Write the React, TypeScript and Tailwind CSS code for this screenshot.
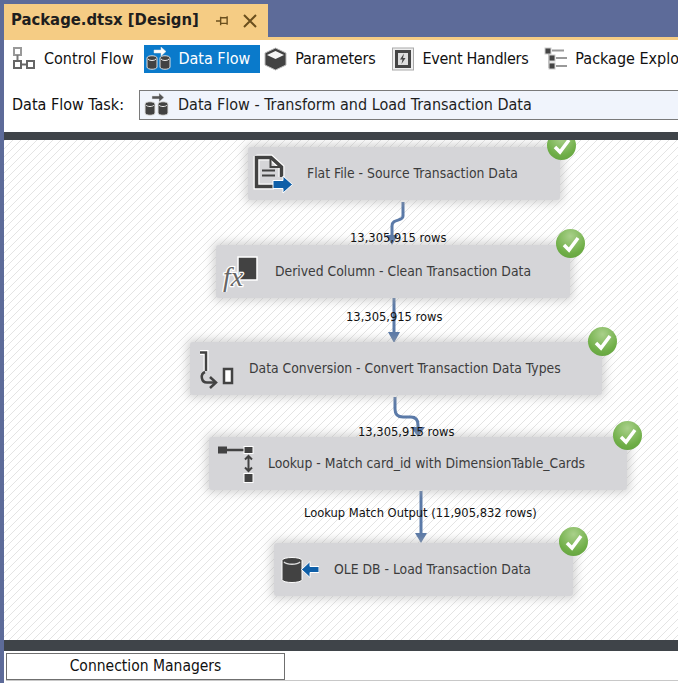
const font = "font-['DejaVu_Sans_Condensed','Noto_Sans',sans-serif]";

const ControlFlowIcon = () => (
  <svg width="24" height="24" viewBox="0 0 24 24" fill="none" stroke="#666" strokeWidth="2">
    <rect x="2" y="1" width="7" height="7" fill="#fff" stroke="#999" />
    <path d="M5.500 8v5" stroke="#777" />
    <rect x="2" y="14" width="7" height="7" fill="#fff" />
    <rect x="15" y="14" width="7" height="7" fill="#fff" />
    <path d="M14 17.500h-4" stroke="#666" />
  </svg>
);

const DataFlowIcon = ({ light = false }: { light?: boolean }) => (
  <svg width="25" height="24" viewBox="0 0 25 24">
    <path d="M8 3h7V0l5 4.500L15 9V6H8z" fill={light ? "#fff" : "#555"} stroke="#ddd" strokeWidth="0.500" />
    <path d="M1 11c0-3 10-3 10 0v9c0 3-10 3-10 0z" fill="#424242" stroke="#ddd" />
    <path d="M14 11c0-3 10-3 10 0v9c0 3-10 3-10 0z" fill="#424242" stroke="#ddd" />
    <path d="M2 12c1 2 7 2 8 0M15 12c1 2 7 2 8 0" fill="none" stroke="#eee" />
  </svg>
);

const ParametersIcon = () => (
  <svg width="23" height="24" viewBox="0 0 23 24">
    <path d="M11.500 1 22 6v12l-10.500 5L1 18V6z" fill="#424242" stroke="#bbb" />
    <path d="M11.500 4 20 8l-8.500 4L3 8z" fill="#f4f4f4" />
  </svg>
);

const EventIcon = () => (
  <svg width="22" height="24" viewBox="0 0 22 24">
    <rect x="0.500" y="1" width="21" height="22" fill="#eee" stroke="#aaa" />
    <rect x="3" y="3" width="16" height="18" fill="#444" />
    <rect x="6" y="6" width="10" height="12" fill="#ddd" />
    <path d="M12 6.500 8 12.500h2.500L9.500 17l4-6H11z" fill="#444" />
  </svg>
);

const ExplorerIcon = () => (
  <svg width="24" height="24" viewBox="0 0 24 24">
    <rect x="1" y="1" width="6" height="6" fill="#444" stroke="#ccc" />
    <path d="M8 3.500h12" stroke="#999" strokeWidth="2" />
    <path d="M5 7v14" stroke="#aaa" strokeWidth="1.500" />
    <rect x="5" y="8" width="6" height="6" fill="#444" stroke="#ccc" />
    <path d="M12 11h11" stroke="#999" strokeWidth="2" />
    <rect x="5" y="16" width="6" height="6" fill="#444" stroke="#ccc" />
    <path d="M12 19h11" stroke="#999" strokeWidth="2" />
  </svg>
);

const Tool = ({
  icon,
  label,
  className,
  active = false,
}: {
  icon: React.ReactNode;
  label: string;
  className: string;
  active?: boolean;
}) => (
  <div className={`flex h-[28px] shrink-0 items-center ${active ? "bg-[#0a7acb] text-white" : "text-[#111]"} ${className}`}>
    {icon}
    <span className="whitespace-nowrap">{label}</span>
  </div>
);

const FlatFileIcon = () => (
  <svg width="40" height="40" viewBox="0 0 40 40" fill="none">
    <path d="M3.500 3.500H18L28.500 13v10M3.500 2v30.500H21" stroke="#fff" strokeWidth="6" />
    <path d="M3.500 3.500H18L28.500 13v10M3.500 2v30.500H21" stroke="#424242" strokeWidth="3.500" />
    <path d="M17.500 3.500V13h10" stroke="#424242" strokeWidth="2" />
    <path d="M9 16.500h13M9 21.500h13" stroke="#424242" strokeWidth="2" />
    <path d="M20 26.500h10V22l9.500 8.500L30 39v-4.500H20z" fill="#0f5fa8" stroke="#fff" strokeWidth="1" />
  </svg>
);

const DerivedIcon = () => (
  <svg width="40" height="40" viewBox="0 0 40 40" fill="none">
    <path d="M17 5h19v23H17z" fill="#424242" stroke="#fff" strokeWidth="1.500" />
    <text x="2" y="34" fontFamily="'Liberation Serif', serif" fontStyle="italic" fontSize="28" fill="#666" stroke="#fff" strokeWidth="2.500" paintOrder="stroke">
      fx
    </text>
  </svg>
);

const ConvertIcon = () => (
  <svg width="40" height="40" viewBox="0 0 40 40" fill="none">
    <path d="M5 3.500h6V22" stroke="#fff" strokeWidth="5" />
    <path d="M5 3.500h6V22" stroke="#424242" strokeWidth="2.500" />
    <path d="M10 23c-5 2-4 10.500 2 10.500h8" stroke="#424242" strokeWidth="2.500" />
    <path d="m15 28 6 5.500-6 5.500" stroke="#424242" strokeWidth="2.500" />
    <rect x="29" y="20" width="8" height="14" fill="#fff" stroke="#424242" strokeWidth="2.500" />
  </svg>
);

const LookupIcon = () => (
  <svg width="40" height="40" viewBox="0 0 40 40" fill="none">
    <path d="M12 6h19" stroke="#424242" strokeWidth="2.500" />
    <rect x="4" y="2.500" width="9" height="7" fill="#424242" />
    <rect x="30" y="2.500" width="9" height="7" fill="#424242" stroke="#fff" />
    <path d="M34.500 12v15M31 15.500l3.500-3.500 3.500 3.500M31 23.500l3.500 3.500 3.500-3.500" stroke="#424242" strokeWidth="2" />
    <rect x="30" y="29.500" width="9" height="9" fill="#424242" stroke="#fff" />
  </svg>
);

const OleIcon = () => (
  <svg width="40" height="40" viewBox="0 0 40 40" fill="none">
    <path d="M3 10.500c0-4 20-4 20 0v19c0 4-20 4-20 0z" fill="#424242" stroke="#fff" />
    <path d="M5 12c3 3 13 3 16 0" stroke="#ddd" strokeWidth="1.500" />
    <path d="M40 16.500h-9v-5l-8.500 8 8.500 8v-5h9z" fill="#0f5fa8" stroke="#fff" />
  </svg>
);

const Check = ({ className }: { className: string }) => (
  <div className={`absolute flex h-[29px] w-[29px] items-center justify-center rounded-full bg-[radial-gradient(circle_at_50%_25%,#a9d08a,#6fae47_65%,#5f9e3c)] ${className}`}>
    <svg width="20" height="18" viewBox="0 0 20 18" fill="none">
      <path d="m3 10 5 5 9-12" stroke="#fff" strokeWidth="3.500" />
    </svg>
  </div>
);

const Node = ({ className, icon, label, iconGap }: { className: string; icon: React.ReactNode; label: string; iconGap: string }) => (
  <div className={`absolute flex h-[53px] items-center rounded-[3px] bg-[#d5d5d8] text-[13.800px] text-[#3c3c3c] shadow-[0_0_8px_3px_rgba(170,170,170,0.5)] ${className}`}>
    <div className={`flex shrink-0 items-center pl-[5px] ${iconGap}`}>{icon}</div>
    <span className="whitespace-nowrap">{label}</span>
  </div>
);

const RowLabel = ({ className, children }: { className: string; children: string }) => (
  <span className={`absolute whitespace-nowrap text-[12.800px] leading-[16px] text-[#111] ${className}`}>{children}</span>
);

const Connectors = () => (
  <svg className="absolute left-0 top-0" width="674" height="500" fill="none" stroke="#5b7aa8" strokeWidth="3">
    <path d="M399 62v14c0 6-11 2-11 10v10" />
    <path d="M382 95h12l-6 10z" fill="#5b7aa8" stroke="none" />
    <path d="M390 158v35" />
    <path d="M384 192h12l-6 11z" fill="#5b7aa8" stroke="none" />
    <path d="M391 257v12c0 6 3 8 8 8h8c5 0 7 3 7 8v3" />
    <path d="M407 287h14l-7 10z" fill="#5b7aa8" stroke="none" />
    <path d="M417 351v43" />
    <path d="M411 393h12l-6 10z" fill="#5b7aa8" stroke="none" />
  </svg>
);

export default function App() {
  return (
    <div className={`flex h-[683px] w-[678px] overflow-hidden bg-[#5d6b99] ${font}`}>
      <div className="w-[4px] shrink-0" />
      <div className="flex min-w-0 flex-1 flex-col">
        <div className="h-[4px] shrink-0" />
        <div className="flex h-[33px] w-[264px] shrink-0 items-center bg-[#f5cc84] pl-[7px] text-[16.500px] font-bold text-[#1e1e1e]">
          <span className="whitespace-nowrap">Package.dtsx [Design]</span>
          <svg className="ml-[17px] shrink-0" width="13" height="14" viewBox="0 0 14 14" fill="none" stroke="#6b4f1d" strokeWidth="1.500">
            <path d="M0 7h5M5 2.500v9M5 3.500h7v6H5M12 2v9" />
          </svg>
          <svg className="ml-[13px] shrink-0" width="16" height="16" viewBox="0 0 16 16" fill="none" stroke="#6b4f1d" strokeWidth="2">
            <path d="m2 2 12 12M14 2 2 14" />
          </svg>
        </div>
        <div className="h-[3px] shrink-0 bg-[#f5cc84]" />
        <div className="flex h-[92px] shrink-0 flex-col bg-white text-[16px]">
          <div className="mt-[5px] flex items-center gap-[1px] overflow-hidden pl-[5px]">
            <Tool icon={<ControlFlowIcon />} label="Control Flow" className="gap-[8px] pl-[3px] pr-[10px]" />
            <Tool icon={<DataFlowIcon light />} label="Data Flow" active className="gap-[7px] pl-[2px] pr-[10px]" />
            <Tool icon={<ParametersIcon />} label="Parameters" className="gap-[8px] pl-[3px] pr-[12px] tracking-[-0.200px]" />
            <Tool icon={<EventIcon />} label="Event Handlers" className="gap-[9px] pl-[3px] pr-[12px] tracking-[-0.300px]" />
            <Tool icon={<ExplorerIcon />} label="Package Explorer" className="gap-[7px] pl-[3px]" />
          </div>
          <div className="mt-[17px] flex items-center gap-[15px] pl-[8px]">
            <span className="whitespace-nowrap text-[#111]">Data Flow Task:</span>
            <div className="flex h-[30px] flex-1 items-center gap-[9px] border border-r-0 border-[#7a7a7a] bg-[#f0f4fc] pl-[4px] text-[#1e1e1e]">
              <DataFlowIcon />
              <span className="whitespace-nowrap">Data Flow - Transform and Load Transaction Data</span>
            </div>
          </div>
        </div>
        <div className="h-[8px] shrink-0 bg-[#3f4449]" />
        <div className="relative h-[500px] shrink-0 overflow-hidden bg-[repeating-linear-gradient(135deg,#e0e0e0_0,#e6e6e6_1px,#ffffff_1.300px,#ffffff_5.657px)]">
          <Connectors />
          <Node className="left-[244px] top-[7px] w-[312px]" icon={<FlatFileIcon />} label="Flat File - Source Transaction Data" iconGap="mr-[14px]" />
          <Node className="left-[212px] top-[105px] w-[354px]" icon={<DerivedIcon />} label="Derived Column - Clean Transaction Data" iconGap="mr-[14px]" />
          <Node className="left-[186px] top-[202px] w-[412px]" icon={<ConvertIcon />} label="Data Conversion - Convert Transaction Data Types" iconGap="mr-[14px]" />
          <Node className="left-[205px] top-[297px] w-[418px]" icon={<LookupIcon />} label="Lookup - Match card_id with DimensionTable_Cards" iconGap="mr-[14px]" />
          <Node className="left-[270px] top-[403px] w-[299px]" icon={<OleIcon />} label="OLE DB - Load Transaction Data" iconGap="mr-[15px]" />
          <Check className="left-[543px] top-[-9px]" />
          <Check className="left-[552px] top-[89px]" />
          <Check className="left-[584px] top-[187px]" />
          <Check className="left-[609px] top-[281px]" />
          <Check className="left-[555px] top-[387px]" />
          <RowLabel className="left-[346px] top-[90px]">13,305,915 rows</RowLabel>
          <RowLabel className="left-[342px] top-[169px]">13,305,915 rows</RowLabel>
          <RowLabel className="left-[354px] top-[284px]">13,305,915 rows</RowLabel>
          <RowLabel className="left-[300px] top-[365px]">Lookup Match Output (11,905,832 rows)</RowLabel>
        </div>
        <div className="h-[11px] shrink-0 bg-[#3f4449]" />
        <div className="flex-1 bg-white pl-[2px] pt-[2px]">
          <div className="flex h-[27px] w-[279px] items-center justify-center border border-[#6f6f6f] text-[15.500px] text-[#111]">Connection Managers</div>
          <div className="h-[1px] bg-[#c8c8c8]" />
        </div>
      </div>
    </div>
  );
}
